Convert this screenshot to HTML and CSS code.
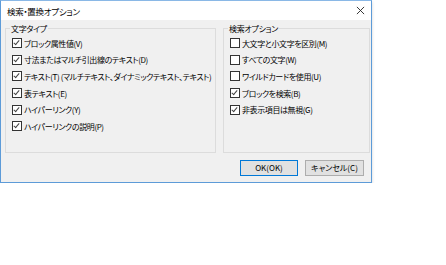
FILE: index.html
```html
<!DOCTYPE html>
<html lang="ja">
<head>
  <meta charset="UTF-8">
  <title>検索・置換オプション</title>
  <link rel="stylesheet" href="styles.css">
</head>
<body>

  <div class="dialog">
    <div class="titlebar">
      <span class="title">検索・置換オプション</span>
      <svg class="close" width="10" height="10" viewBox="0 0 10 10">
        <path d="M1 1 L9 9 M9 1 L1 9" stroke="#222" stroke-width="1" fill="none"/>
      </svg>
    </div>

    <div class="content">
      <div class="groups">
        <fieldset class="group group-left">
          <legend>文字タイプ</legend>
          <label class="row"><span class="box checked"></span>ブロック属性値(V)</label>
          <label class="row"><span class="box checked"></span>寸法またはマルチ引出線のテキスト(D)</label>
          <label class="row"><span class="box checked"></span>テキスト(T) (マルチテキスト、ダイナミックテキスト、テキスト)</label>
          <label class="row"><span class="box checked"></span>表テキスト(E)</label>
          <label class="row"><span class="box checked"></span>ハイパーリンク(Y)</label>
          <label class="row"><span class="box checked"></span>ハイパーリンクの説明(P)</label>
        </fieldset>

        <fieldset class="group group-right">
          <legend>検索オプション</legend>
          <label class="row"><span class="box"></span>大文字と小文字を区別(M)</label>
          <label class="row"><span class="box"></span>すべての文字(W)</label>
          <label class="row"><span class="box"></span>ワイルドカードを使用(U)</label>
          <label class="row"><span class="box checked"></span>ブロックを検索(B)</label>
          <label class="row"><span class="box checked"></span>非表示項目は無視(G)</label>
        </fieldset>
      </div>

      <div class="buttons">
        <button class="btn btn-default">OK(OK)</button>
        <button class="btn">キャンセル(C)</button>
      </div>
    </div>
  </div>

</body>
</html>
```

FILE: styles.css
```css
body {
  margin: 0;
  background: #fff;
  font-family: "Noto Sans CJK JP", "Noto Sans", sans-serif;
  font-size: 8px;
  font-feature-settings: "palt";
  color: #000;
}

.dialog {
  width: 372px;
  height: 183px;
  box-sizing: border-box;
  border: 1px solid #5d9bd8;
  border-top-color: #8ab8e6;
  background: #f0f0f0;
  box-shadow: 0 2px 3px rgba(0, 0, 0, 0.18);
}

.titlebar {
  height: 19px;
  background: #fff;
  display: flex;
  align-items: center;
  justify-content: space-between;
  padding: 0 6px 0 6px;
}

.title {
  font-size: 8.5px;
  line-height: 1;
  margin-top: 1px;
  letter-spacing: -0.3px;
}

.close {
  display: block;
  width: 9px;
  height: 9px;
}

.content {
  padding: 4px 1px 0 4px;
}

.groups {
  display: flex;
  gap: 7px;
}

.group {
  margin: 0;
  min-width: 0;
  border: 1px solid #dcdcdc;
  height: 129px;
  box-sizing: border-box;
  padding: 2px 6px 0 6px;
  display: flex;
  flex-direction: column;
}

.group legend {
  padding: 0 1px;
  margin-left: -2px;
  line-height: 9px;
  font-size: 8px;
  letter-spacing: -0.3px;
}

.group-left {
  width: 211px;
}

.group-right {
  width: 147px;
}

.row {
  display: flex;
  align-items: center;
  height: 16.6px;
  white-space: nowrap;
  letter-spacing: -0.4px;
}

.box {
  width: 8px;
  height: 8px;
  border: 1px solid #333;
  background: #fff;
  margin-right: 2px;
  flex: none;
  position: relative;
}

.box.checked::after {
  content: "";
  position: absolute;
  left: 2px;
  top: 0px;
  width: 2px;
  height: 5px;
  border: solid #444;
  border-width: 0 1px 1px 0;
  transform: rotate(40deg);
}

.buttons {
  display: flex;
  justify-content: flex-end;
  gap: 7px;
  margin-top: 7px;
  padding-right: 6px;
}

.btn {
  height: 16px;
  box-sizing: border-box;
  border: 1px solid #adadad;
  background: #e1e1e1;
  font-family: "Noto Sans CJK JP", "Noto Sans", sans-serif;
  font-size: 8px;
  font-feature-settings: "palt";
  padding: 0;
  width: 59px;
  color: #000;
  line-height: 1;
}

.btn-default {
  width: 58px;
  border-color: #0078d7;
}
```
